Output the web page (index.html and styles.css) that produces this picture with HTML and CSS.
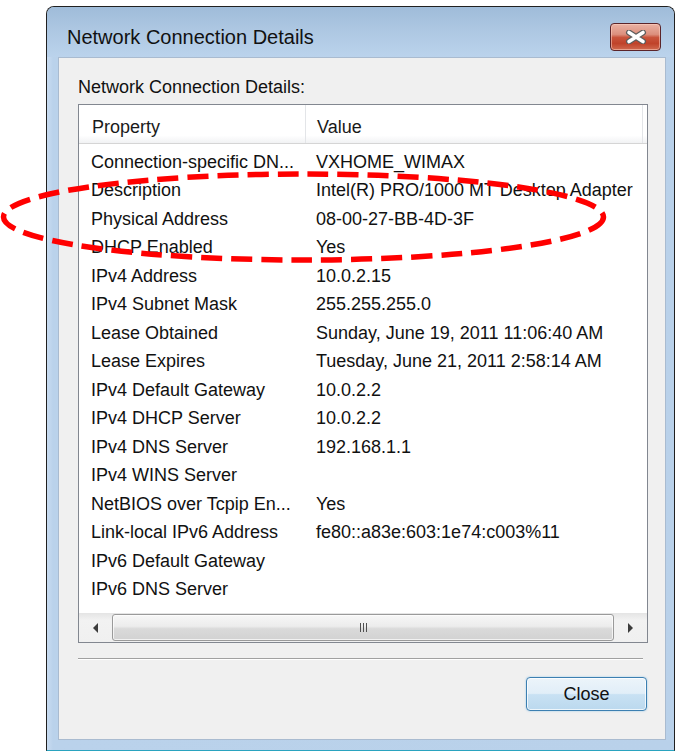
FILE: index.html
```html
<!DOCTYPE html>
<html lang="en">
<head>
<meta charset="utf-8">
<title>Network Connection Details</title>
<link rel="stylesheet" href="styles.css">
</head>
<body>
<div class="window">
  <div class="titlebar">
    <span class="title">Network Connection Details</span>
    <div class="caption-close" aria-label="Close">
      <svg width="22" height="14" viewBox="0 0 22 14">
        <path d="M4 2.5 L18 11.5 M18 2.5 L4 11.5" stroke="#5c5c5c" stroke-width="6" stroke-linecap="round" fill="none"/>
        <path d="M4 2.5 L18 11.5 M18 2.5 L4 11.5" stroke="#ffffff" stroke-width="3.6" stroke-linecap="round" fill="none"/>
      </svg>
    </div>
  </div>
  <div class="client">
    <div class="label">Network Connection Details:</div>
    <div class="listview">
      <div class="lv-header">
        <div class="hcell prop">Property</div>
        <div class="hcell val">Value</div>
        <div class="hcell rest"></div>
      </div>
      <div class="lv-body">
        <div class="row"><span class="prop">Connection-specific DN...</span><span class="val">VXHOME_WIMAX</span></div>
        <div class="row"><span class="prop">Description</span><span class="val">Intel(R) PRO/1000 MT Desktop Adapter</span></div>
        <div class="row"><span class="prop">Physical Address</span><span class="val">08-00-27-BB-4D-3F</span></div>
        <div class="row"><span class="prop">DHCP Enabled</span><span class="val">Yes</span></div>
        <div class="row"><span class="prop">IPv4 Address</span><span class="val">10.0.2.15</span></div>
        <div class="row"><span class="prop">IPv4 Subnet Mask</span><span class="val">255.255.255.0</span></div>
        <div class="row"><span class="prop">Lease Obtained</span><span class="val">Sunday, June 19, 2011 11:06:40 AM</span></div>
        <div class="row"><span class="prop">Lease Expires</span><span class="val">Tuesday, June 21, 2011 2:58:14 AM</span></div>
        <div class="row"><span class="prop">IPv4 Default Gateway</span><span class="val">10.0.2.2</span></div>
        <div class="row"><span class="prop">IPv4 DHCP Server</span><span class="val">10.0.2.2</span></div>
        <div class="row"><span class="prop">IPv4 DNS Server</span><span class="val">192.168.1.1</span></div>
        <div class="row"><span class="prop">IPv4 WINS Server</span><span class="val"></span></div>
        <div class="row"><span class="prop">NetBIOS over Tcpip En...</span><span class="val">Yes</span></div>
        <div class="row"><span class="prop">Link-local IPv6 Address</span><span class="val">fe80::a83e:603:1e74:c003%11</span></div>
        <div class="row"><span class="prop">IPv6 Default Gateway</span><span class="val"></span></div>
        <div class="row"><span class="prop">IPv6 DNS Server</span><span class="val"></span></div>
      </div>
      <div class="hscroll">
        <div class="sb-btn"><span class="tri-left"></span></div>
        <div class="sb-track">
          <div class="sb-thumb"><span class="grip"></span></div>
        </div>
        <div class="sb-btn"><span class="tri-right"></span></div>
      </div>
    </div>
    <div class="separator"></div>
    <div class="buttons">
      <button class="btn">Close</button>
    </div>
  </div>
</div>

<svg class="markup" width="675" height="751" viewBox="0 0 675 751">
  <ellipse cx="303.5" cy="217" rx="300" ry="43" fill="none" stroke="#ff0000" stroke-width="5.5" stroke-dasharray="21 9"/>
</svg>
</body>
</html>
```

FILE: styles.css
```css
html, body {
  margin: 0;
  padding: 0;
}

body {
  background: #ffffff;
  width: 675px;
  height: 751px;
  overflow: hidden;
  position: relative;
  font-family: "Liberation Sans", Arial, sans-serif;
  color: #000;
}

/* Aero-style dialog frame */
.window {
  box-sizing: border-box;
  margin: 6px 0 0 46px;
  width: 629px;
  height: 745px;
  border: 1px solid #202020;
  border-bottom-color: #2aa3bf;
  border-radius: 8px 8px 0 0;
  background: linear-gradient(90deg, #c9dcf1 0px, #bad2eb 6px, #b9d1ea 100%);
  display: flex;
  flex-direction: column;
  padding: 0 8px 10px 11px;
}

.titlebar {
  height: 50px;
  margin: 0 -8px 0 -11px;
  padding: 16px 13px 0 20px;
  box-sizing: border-box;
  display: flex;
  align-items: flex-start;
  justify-content: space-between;
  border-radius: 7px 7px 0 0;
  background: linear-gradient(180deg, #9fbcd9 0%, #adc7e2 45%, #bbd3ec 100%);
}

.title {
  font-size: 20px;
  line-height: 28px;
  color: #111;
}

.caption-close {
  box-sizing: border-box;
  width: 51px;
  height: 28px;
  border: 1px solid #5b2429;
  border-radius: 4px;
  background: linear-gradient(180deg, #eab2a4 0%, #dc8f7d 40%, #c9533b 52%, #c0432a 75%, #d06a4f 100%);
  box-shadow: inset 0 0 0 1px rgba(255, 210, 195, 0.55);
  display: flex;
  align-items: center;
  justify-content: center;
}

.caption-close svg {
  display: block;
}

/* Dialog client area */
.client {
  flex: 1;
  box-sizing: border-box;
  background: #f0f0f0;
  border: 1px solid #a9bbd0;
  padding: 18px 17px 0 19px;
  display: flex;
  flex-direction: column;
}

.label {
  font-size: 18px;
  line-height: 22px;
  color: #111;
}

.listview {
  margin-top: 6px;
  height: 539px;
  box-sizing: border-box;
  border: 1px solid #828790;
  background: #ffffff;
  display: flex;
  flex-direction: column;
}

.lv-header {
  display: flex;
  height: 39px;
  box-sizing: border-box;
  border-bottom: 1px solid #d5d5d5;
  background: linear-gradient(180deg, #ffffff 0%, #ffffff 80%, #f1f2f4 100%);
  font-size: 18px;
  line-height: 22px;
}

.hcell {
  box-sizing: border-box;
  padding-top: 11px;
  color: #1a1a1a;
}

.hcell.prop {
  width: 227px;
  padding-left: 13px;
  border-right: 1px solid #e3e5e8;
}

.hcell.val {
  width: 337px;
  padding-left: 11px;
  border-right: 1px solid #e3e5e8;
}

.hcell.rest {
  flex: 1;
}

.lv-body {
  flex: 1;
  padding-top: 3.5px;
  overflow: hidden;
}

.row {
  display: flex;
  height: 28.5px;
  line-height: 28.5px;
  font-size: 18px;
  white-space: nowrap;
  color: #111;
}

.row .prop {
  width: 227px;
  padding-left: 12px;
  box-sizing: border-box;
  flex: none;
}

.row .val {
  padding-left: 10px;
}

/* Horizontal scroll bar */
.hscroll {
  height: 29px;
  display: flex;
  background: linear-gradient(180deg, #e4e4e4 0%, #f2f2f2 25%, #f0f0f0 100%);
}

.sb-btn {
  width: 33px;
  display: flex;
  align-items: center;
  justify-content: center;
}

.tri-left {
  width: 0;
  height: 0;
  border-top: 5px solid transparent;
  border-bottom: 5px solid transparent;
  border-right: 5px solid #3c3c3c;
}

.tri-right {
  width: 0;
  height: 0;
  border-top: 5px solid transparent;
  border-bottom: 5px solid transparent;
  border-left: 5px solid #3c3c3c;
}

.sb-track {
  flex: 1;
  display: flex;
  padding: 1px 0 1px 0;
}

.sb-thumb {
  flex: 1;
  box-sizing: border-box;
  border: 1px solid #9a9a9a;
  border-radius: 3px;
  background: linear-gradient(180deg, #f7f7f7 0%, #ececec 45%, #dadada 55%, #d2d2d2 100%);
  box-shadow: inset 0 0 0 1px rgba(255, 255, 255, 0.7);
  display: flex;
  align-items: center;
  justify-content: center;
}

.grip {
  width: 7px;
  height: 9px;
  background: linear-gradient(90deg, #505050 0 1px, transparent 1px 3px, #505050 3px 4px, transparent 4px 6px, #505050 6px 7px);
}

.separator {
  margin: 15px 5px 0 0;
  height: 1px;
  border-bottom: 1px solid #ffffff;
  background: #a0a0a0;
}

.buttons {
  display: flex;
  justify-content: flex-end;
  margin-top: 17px;
  padding-right: 1px;
}

.btn {
  width: 121px;
  height: 34px;
  box-sizing: border-box;
  border: 1px solid #3c7fb1;
  border-radius: 4px;
  background: linear-gradient(180deg, #ecf4fa 0%, #e1eef8 48%, #c8e1f3 52%, #bbd9ee 100%);
  box-shadow: inset 0 0 0 1px rgba(255, 255, 255, 0.75), 0 0 2px rgba(80, 170, 230, 0.6);
  font-family: "Liberation Sans", Arial, sans-serif;
  font-size: 18px;
  color: #111;
  padding: 0;
}

/* Hand-drawn highlight around the physical address rows */
.markup {
  position: absolute;
  left: 0;
  top: 0;
  pointer-events: none;
}
```
